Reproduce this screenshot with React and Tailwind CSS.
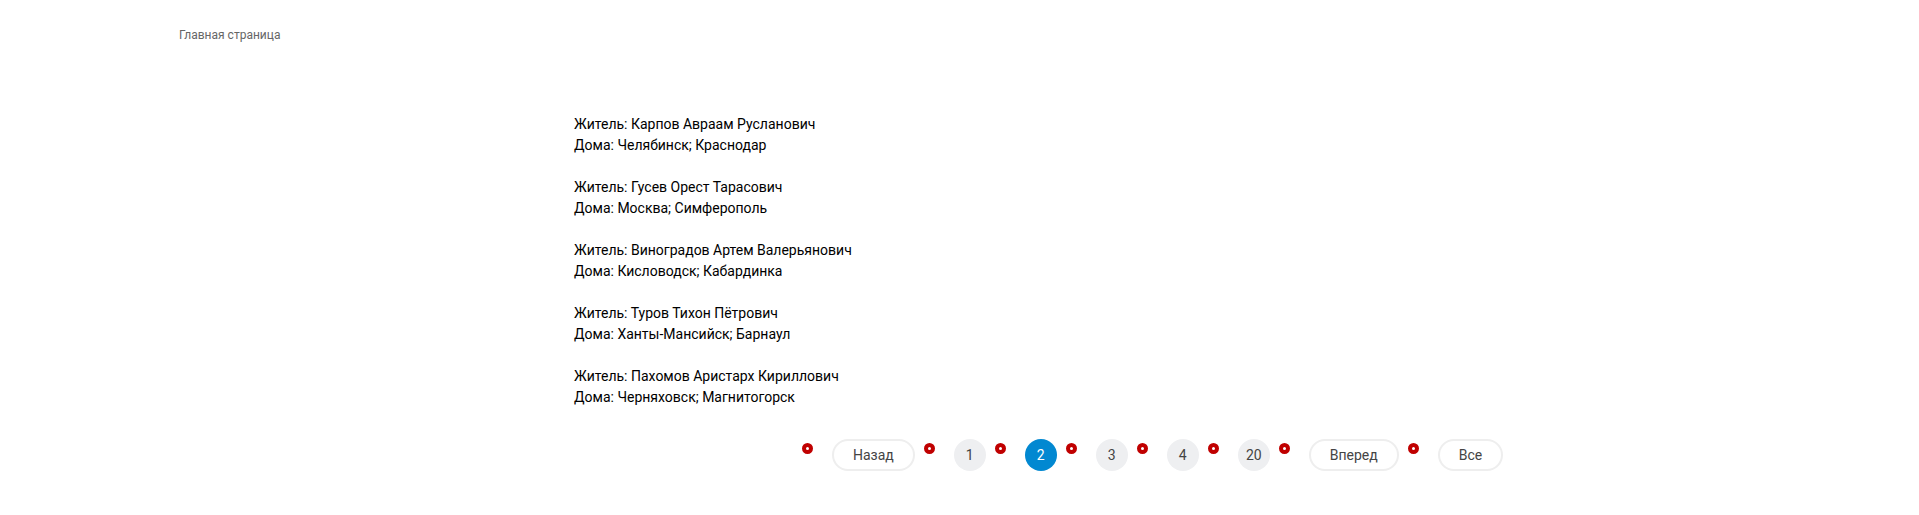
import React from "react";

const residents = [
    { name: "Карпов Авраам Русланович", homes: "Челябинск; Краснодар" },
    { name: "Гусев Орест Тарасович", homes: "Москва; Симферополь" },
    { name: "Виноградов Артем Валерьянович", homes: "Кисловодск; Кабардинка" },
    { name: "Туров Тихон Пётрович", homes: "Ханты-Мансийск; Барнаул" },
    { name: "Пахомов Аристарх Кириллович", homes: "Черняховск; Магнитогорск" },
];

const pages = [
    { label: "Назад", kind: "pill" },
    { label: "1", kind: "num" },
    { label: "2", kind: "num", active: true },
    { label: "3", kind: "num" },
    { label: "4", kind: "num" },
    { label: "20", kind: "num" },
    { label: "Вперед", kind: "pill" },
    { label: "Все", kind: "pill" },
];

const PageButton = ({ page }) => {
    if (page.kind === "pill") {
        return (
            <button className="h-8 px-[19px] rounded-full border-2 border-[#eeeeee] bg-white text-[14px] text-[#444] leading-none">
                {page.label}
            </button>
        );
    }
    return (
        <button
            className={`w-8 h-8 rounded-full text-[14px] leading-none ${page.active ? "bg-[#0288d1] text-white" : "bg-[#eeeff1] text-[#444]"
                }`}
        >
            {page.label}
        </button>
    );
};

export default function App() {
    return (
        <div className="min-h-[515px] bg-white font-['Roboto',sans-serif]">
            <div className="pl-[179px] pt-[28px] text-[12px] leading-[14px] text-[#666]">
                Главная страница
            </div>

            <div className="pl-[574px] pt-[72px] text-[14px] leading-[21px] text-black">
                {residents.map((r) => (
                    <div key={r.name} className="mb-[21px]">
                        <div>Житель: {r.name}</div>
                        <div>Дома: {r.homes}</div>
                    </div>
                ))}
            </div>

            <ul className="flex gap-[9px] pl-[802px] mt-[31px]">
                {pages.map((p) => (
                    <li key={p.label} className="flex items-start gap-[19px]">
                        <span className="mt-[4px] w-[11px] h-[11px] rounded-full border-[4px] border-[#c00000] bg-white" />
                        <PageButton page={p} />
                    </li>
                ))}
            </ul>
        </div>
    );
}
